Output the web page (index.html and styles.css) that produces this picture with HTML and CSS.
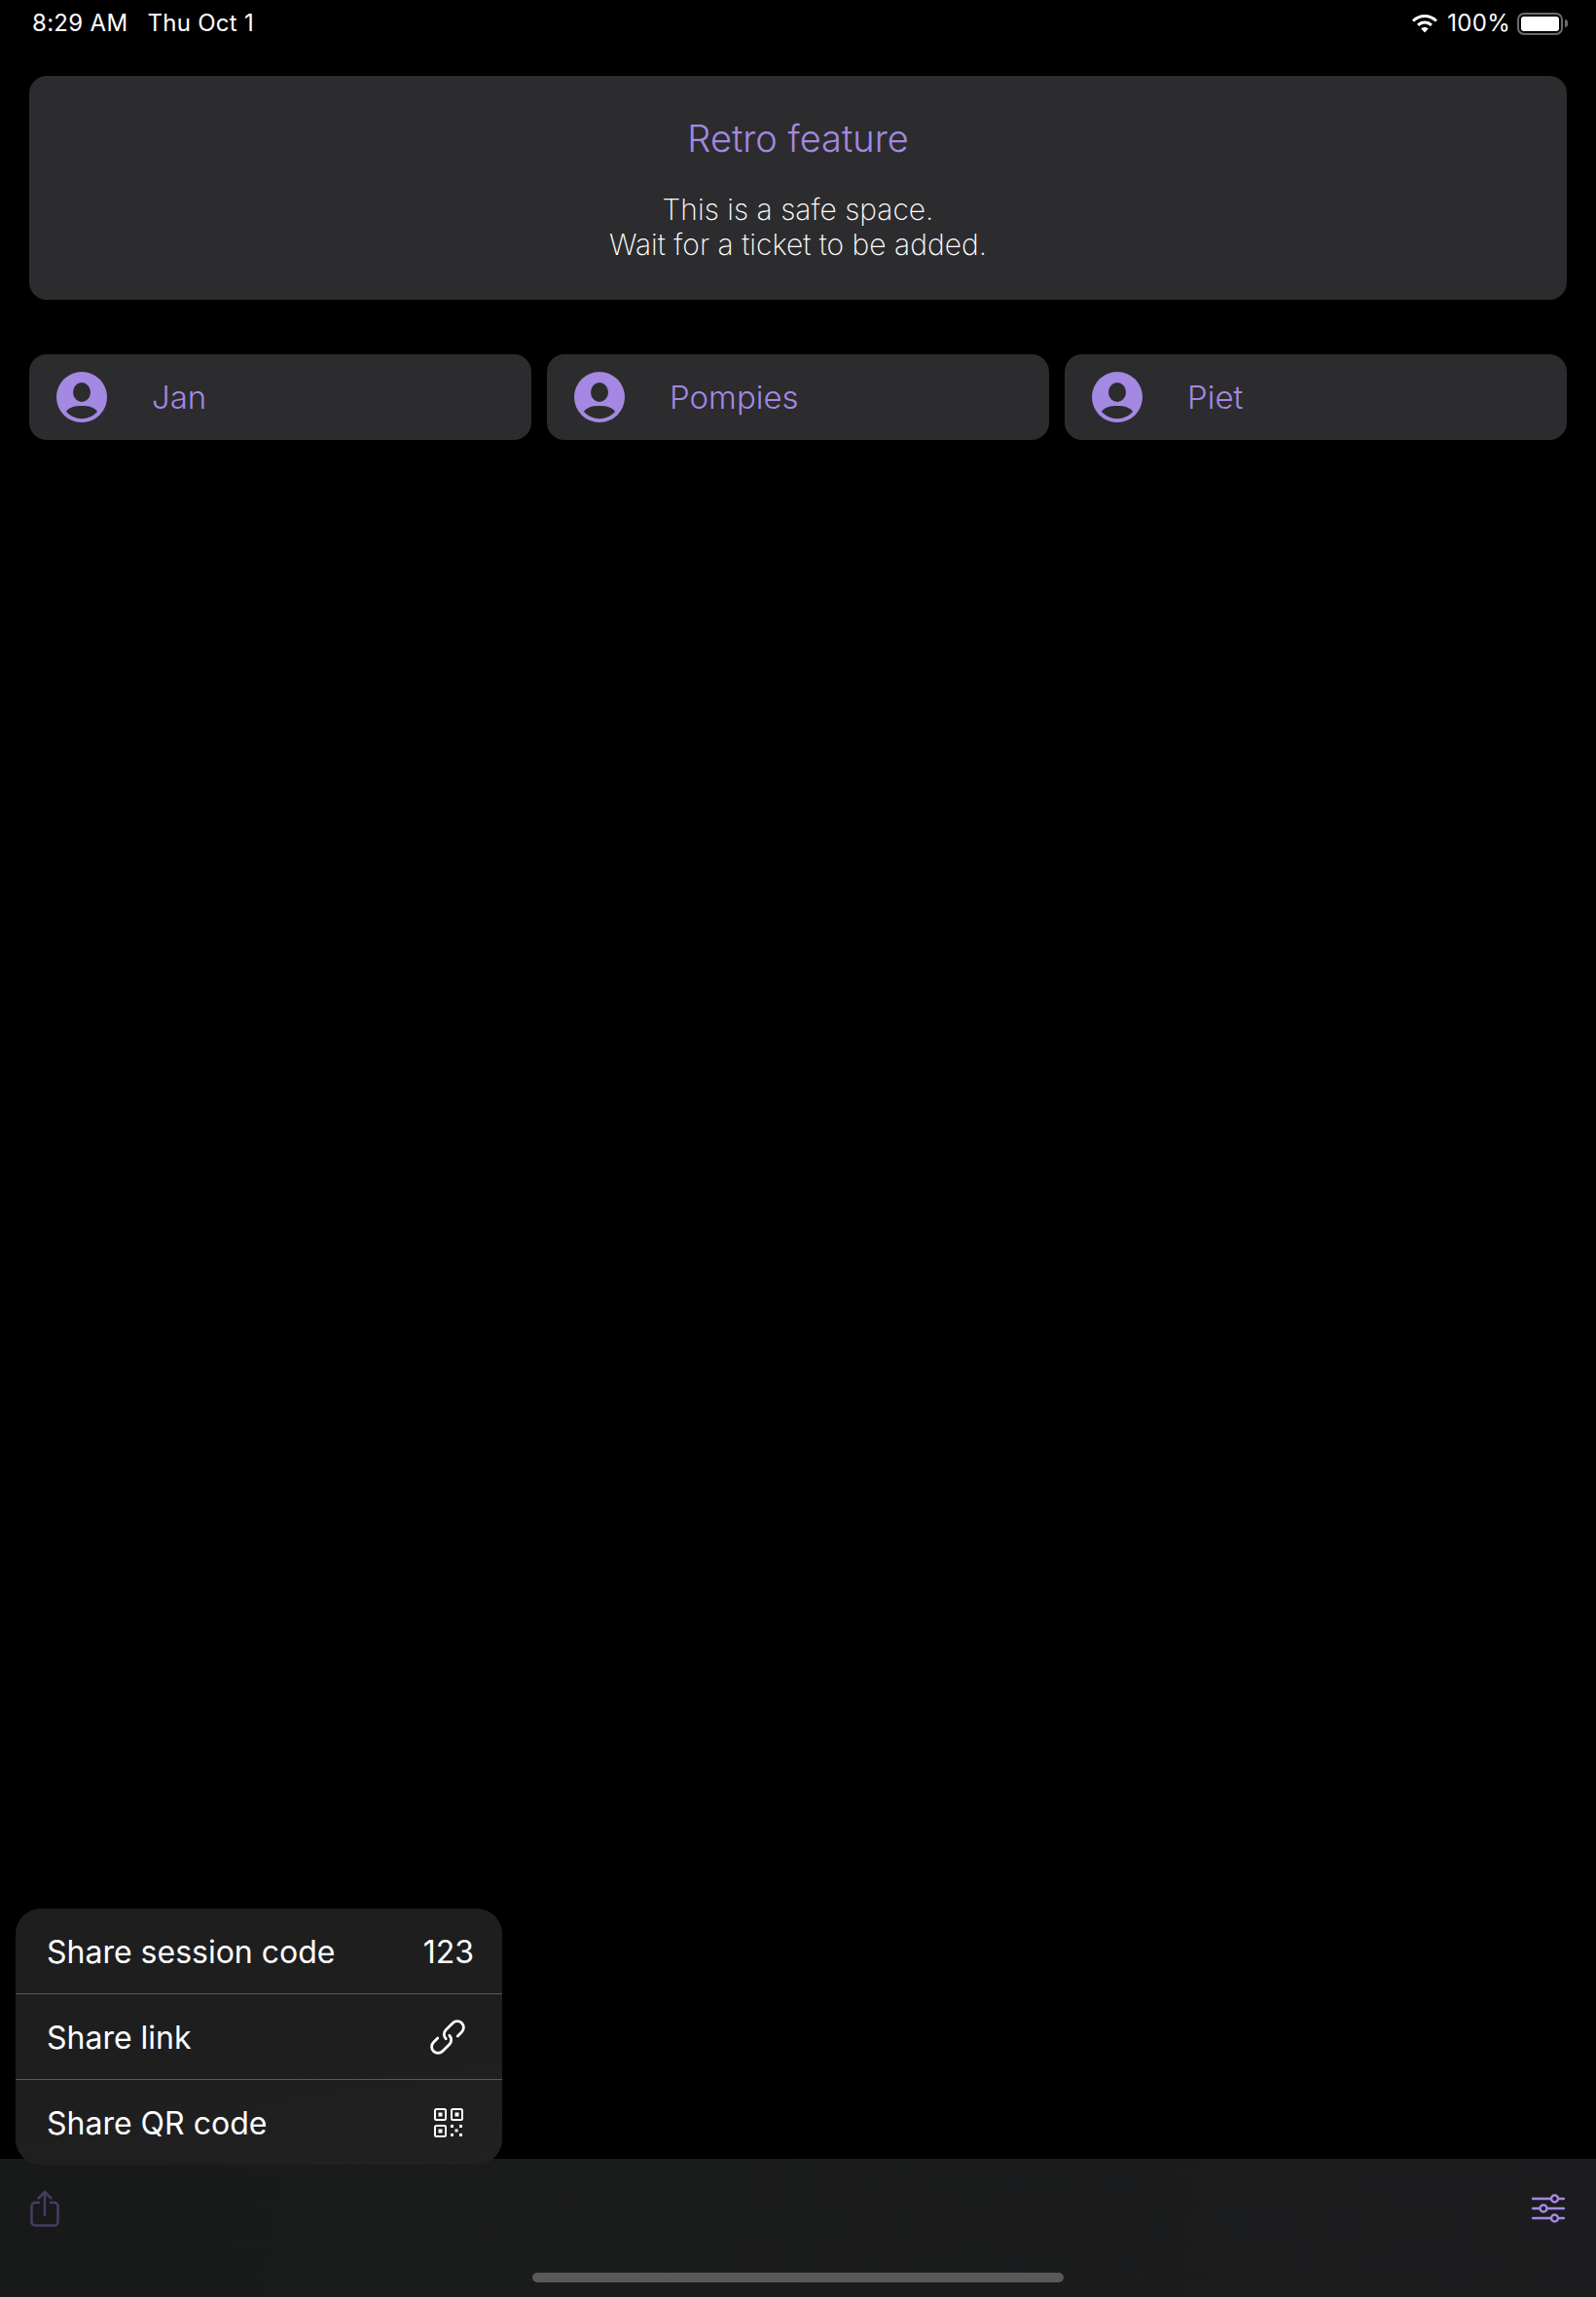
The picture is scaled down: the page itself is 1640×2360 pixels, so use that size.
FILE: index.html
```html
<!DOCTYPE html>
<html lang="en">
<head>
<meta charset="utf-8">
<title>Retro feature</title>
<link rel="stylesheet" href="styles.css">
</head>
<body>
<div class="screen">
  <header class="status">
    <div class="status-left"><span>8:29 AM</span><span>Thu Oct 1</span></div>
    <div class="status-right">
      <svg class="wifi" viewBox="0 0 28 20" width="28" height="20"><path d="M14 1C9 1 4.500 3 1 6.400L3 8.600C6 5.700 9.800 4 14 4S22 5.700 25 8.600L27 6.400C23.500 3 19 1 14 1ZM14 7.500C11 7.500 8.200 8.700 6 10.800L8.200 13C9.800 11.500 11.800 10.500 14 10.500S18.200 11.500 19.800 13L22 10.800C19.800 8.700 17 7.500 14 7.500ZM14 14C12.600 14 11.300 14.500 10.300 15.500L14 19.500L17.700 15.500C16.700 14.500 15.400 14 14 14Z"/></svg>
      <span>100%</span>
      <div class="battery"><div class="battery-body"><div class="battery-fill"></div></div><div class="battery-nub"></div></div>
    </div>
  </header>

  <main class="content">
    <section class="card">
      <h1 class="card-title">Retro feature</h1>
      <p class="card-text">This is a safe space.<br>Wait for a ticket to be added.</p>
    </section>
    <section class="people">
      <div class="chip">
        <svg class="avatar" viewBox="0 0 52 52"><circle cx="26" cy="26" r="26" fill="#a488e2"/><ellipse cx="26" cy="21" rx="9" ry="10" fill="#2c2c2e"/><path d="M10 41C13 36 19 35 26 35S39 36 42 41C38 45.500 32 48.200 26 48.200S14 45.500 10 41Z" fill="#2c2c2e"/></svg>
        <span class="chip-name">Jan</span>
      </div>
      <div class="chip">
        <svg class="avatar" viewBox="0 0 52 52"><circle cx="26" cy="26" r="26" fill="#a488e2"/><ellipse cx="26" cy="21" rx="9" ry="10" fill="#2c2c2e"/><path d="M10 41C13 36 19 35 26 35S39 36 42 41C38 45.500 32 48.200 26 48.200S14 45.500 10 41Z" fill="#2c2c2e"/></svg>
        <span class="chip-name">Pompies</span>
      </div>
      <div class="chip">
        <svg class="avatar" viewBox="0 0 52 52"><circle cx="26" cy="26" r="26" fill="#a488e2"/><ellipse cx="26" cy="21" rx="9" ry="10" fill="#2c2c2e"/><path d="M10 41C13 36 19 35 26 35S39 36 42 41C38 45.500 32 48.200 26 48.200S14 45.500 10 41Z" fill="#2c2c2e"/></svg>
        <span class="chip-name">Piet</span>
      </div>
    </section>
  </main>

  <footer class="toolbar">
    <svg class="tool-share" viewBox="0 0 30 38" width="30" height="38" fill="none" stroke="#463d60" stroke-width="2.500" stroke-linecap="round" stroke-linejoin="round"><path d="M9 13H5A3.500 3.500 0 0 0 1.500 16.500V33A3.500 3.500 0 0 0 5 36.500H25A3.500 3.500 0 0 0 28.500 33V16.500A3.500 3.500 0 0 0 25 13H21"/><path d="M15 26V2M8.500 8.500L15 2L21.500 8.500"/></svg>
    <svg class="tool-sliders" viewBox="0 0 34 30" width="34" height="30" fill="none" stroke="#a488e2" stroke-width="2.500" stroke-linecap="round"><path d="M1 5H19.500M27.500 5H33M1 15H8M16 15H33M1 25H19.500M27.500 25H33"/><circle cx="23.500" cy="5" r="3.500"/><circle cx="12" cy="15" r="3.500"/><circle cx="23.500" cy="25" r="3.500"/></svg>
    <div class="home-bar"></div>
  </footer>

  <nav class="menu">
    <div class="menu-row"><span class="menu-label">Share session code</span><span class="menu-label">123</span></div>
    <div class="menu-row"><span class="menu-label">Share link</span>
      <svg class="menu-icon" viewBox="0 0 36 36" width="36" height="36" fill="none" stroke="#fff" stroke-width="2.800" stroke-linecap="round"><g transform="translate(18 18) rotate(-45)"><path d="M8 6.500H14A6.500 6.500 0 0 0 14 -6.500H4A6.500 6.500 0 0 0 -2.500 0"/><path transform="rotate(180)" d="M8 6.500H14A6.500 6.500 0 0 0 14 -6.500H4A6.500 6.500 0 0 0 -2.500 0"/></g></svg>
    </div>
    <div class="menu-row"><span class="menu-label">Share QR code</span>
      <svg class="menu-icon qr" viewBox="0 0 32 32" width="32" height="32" fill="#fff"><g fill="none" stroke="#fff" stroke-width="2"><rect x="2" y="2" width="11" height="11" rx="1.500"/><rect x="19" y="2" width="11" height="11" rx="1.500"/><rect x="2" y="19" width="11" height="11" rx="1.500"/></g><rect x="5.500" y="5.500" width="4" height="4"/><rect x="22.500" y="5.500" width="4" height="4"/><rect x="5.500" y="22.500" width="4" height="4"/><rect x="18" y="18" width="3" height="3"/><rect x="27" y="18" width="3" height="3"/><rect x="22.500" y="22.500" width="3" height="3"/><rect x="18" y="27" width="3" height="3"/><rect x="27" y="27" width="3" height="3"/></svg>
    </div>
  </nav>
</div>
</body>
</html>
```
FILE: styles.css
```css
* { box-sizing: border-box; }
html, body { margin: 0; padding: 0; background: #000; }
body { font-family: Inter, "Noto Sans", "Liberation Sans", sans-serif; color: #fff; }

.screen {
  position: relative;
  width: 1640px;
  height: 2360px;
  display: flex;
  flex-direction: column;
  overflow: hidden;
}

.status {
  height: 78px;
  padding: 9px 29px 0 33px;
  display: flex;
  justify-content: space-between;
  align-items: flex-start;
  font-size: 24px;
  line-height: 30px;
  letter-spacing: 0.3px;
  color: #fff;
}
.status-left { display: flex; gap: 20px; }
.status-right { display: flex; align-items: center; gap: 8px; }
.wifi { fill: #fff; margin-right: 1px; }
.battery { display: flex; align-items: center; gap: 2px; margin-left: -1px; }
.battery-body {
  width: 47px;
  height: 23px;
  border: 2px solid #6b6b6b;
  border-radius: 7px;
  padding: 2px;
}
.battery-fill { width: 100%; height: 100%; background: #fff; border-radius: 3px; }
.battery-nub { width: 3px; height: 8px; background: #6b6b6b; border-radius: 0 3px 3px 0; }

.content { flex: 1; padding: 0 30px; display: flex; flex-direction: column; gap: 56px; }

.card {
  height: 230px;
  background: #2c2c2e;
  border-radius: 18px;
  padding: 40px 0 0;
  text-align: center;
}
.card-title {
  margin: 0;
  font-size: 38px;
  line-height: 48px;
  font-weight: 300;
  color: #a488e2;
}
.card-text {
  margin: 31px 0 0;
  font-size: 30px;
  line-height: 36px;
  font-weight: 250;
  color: #fff;
}

.people { display: flex; gap: 16px; }
.chip {
  flex: 1;
  height: 88px;
  background: #2c2c2e;
  border-radius: 18px;
  padding: 0 28px;
  display: flex;
  align-items: center;
  gap: 46px;
}
.avatar { width: 52px; height: 52px; flex: none; }
.chip-name { font-size: 33px; font-weight: 300; color: #a488e2; }

.toolbar {
  position: relative;
  height: 142px;
  flex: none;
  background: linear-gradient(100deg, #181a19 0%, #1a1b1b 45%, #1c1c1e 100%);
  padding: 32px 32px 0 31px;
  display: flex;
  justify-content: space-between;
  align-items: flex-start;
}
.tool-sliders { margin-top: 4px; }
.home-bar {
  position: absolute;
  left: 547px;
  bottom: 15px;
  width: 546px;
  height: 10px;
  border-radius: 5px;
  background: #59595b;
}

.menu {
  position: absolute;
  left: 16px;
  top: 1961px;
  width: 500px;
  height: 263px;
  background: linear-gradient(170deg, #1e1e1f 0%, #1e1e1f 55%, #212122 100%);
  border-radius: 26px;
  overflow: hidden;
  display: flex;
  flex-direction: column;
}
.menu-row {
  flex: 1;
  padding: 0 29px 0 32px;
  display: flex;
  justify-content: space-between;
  align-items: center;
  font-size: 32px;
  font-weight: 400;
  border-top: 1px solid #59595b;
}
.menu-row:first-child { border-top: 0; }
.menu-label { padding-top: 2px; }
.menu-icon { flex: none; margin-right: 9px; }
.menu-icon.qr { margin-right: 10px; }
```
